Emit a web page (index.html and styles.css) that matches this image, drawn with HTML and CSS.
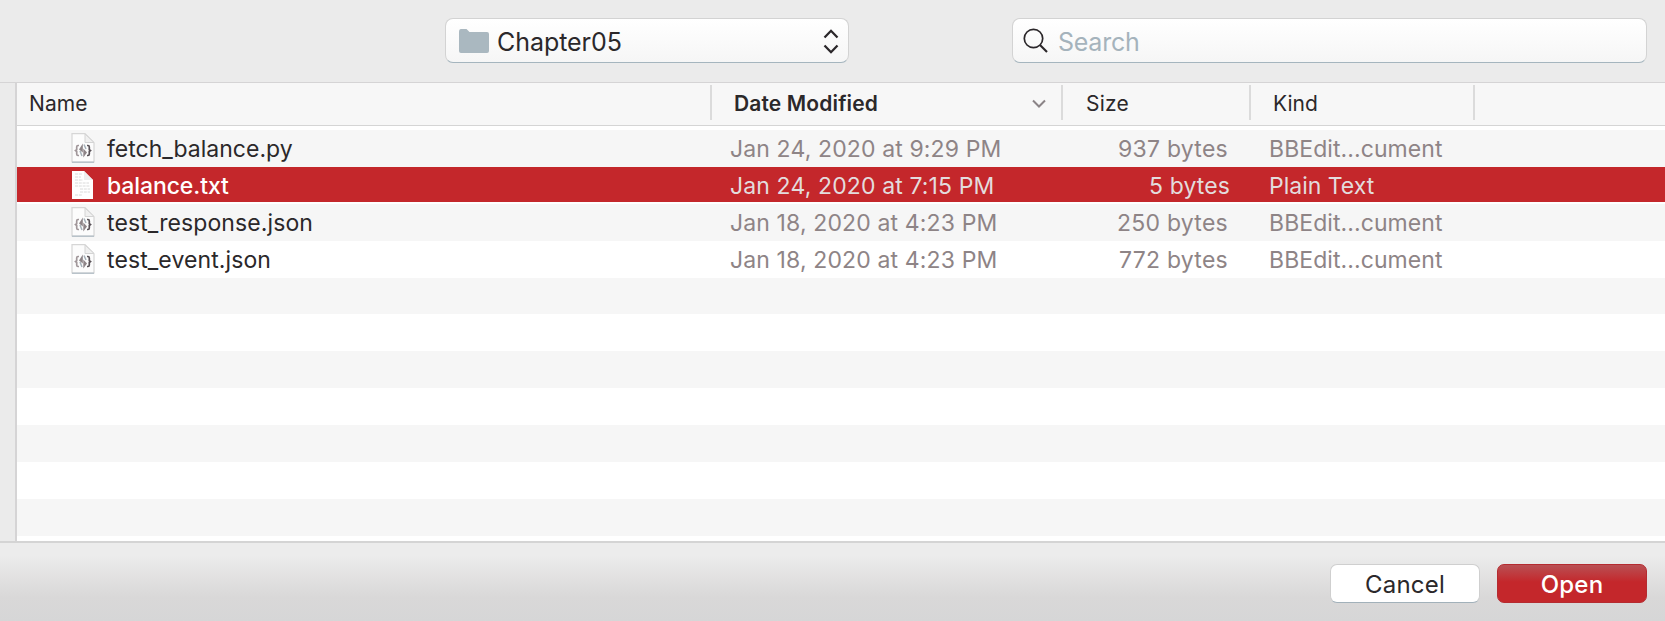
FILE: index.html
```html
<!DOCTYPE html>
<html lang="en">
<head>
<meta charset="utf-8">
<title>Open</title>
<link rel="stylesheet" href="styles.css">
</head>
<body>
<svg class="defs" aria-hidden="true">
  <symbol id="code-doc" viewBox="0 0 24 30">
    <path d="M1 .7h13l9 9V29H1z" fill="#fcfcfc" stroke="#d6d6d6" stroke-width="1.2"/>
    <path d="M14 1v8.500h9z" fill="#f0f0f0" stroke="#d4d4d4"/>
    <path d="M1 29.200h22" stroke="#adb9c2" stroke-width="1.200"/>
    <path d="M8 12.500H7q-1.300 0-1.300 1.500v2.500L4.500 17.500l1.200 1V21Q5.700 22.500 7 22.500h1" fill="none" stroke="#a1979a" stroke-width="1.700"/>
    <path d="M16 12.500h1q1.300 0 1.300 1.500v2.500l1.200 1-1.200 1V21q0 1.500-1.300 1.500h-1" fill="none" stroke="#5a5358" stroke-width="1.700"/>
    <path d="M11.800 10.500v9L8 16.500z" fill="#8e8588"/>
    <path d="M12.300 15.500l3.700 4-3.700 5z" fill="#8e8588"/>
    <path d="M9 18l2 5M13 11.500l2 4.500" stroke="#a5b1b9" stroke-width="1.500"/>
  </symbol>
  <symbol id="text-doc" viewBox="0 0 24 30">
    <path d="M1 1h12l9 9v19H1z" fill="#fff"/>
    <path d="M13 1v9h9z" fill="#eee"/>
    <path d="M4 4h7M4 7h6M4 10h8M4 13h14M4 16h15M9 19h10M9 22h10M4 25h7" stroke="#dadada" stroke-dasharray="3 .8"/>
  </symbol>
</svg>
<div class="dialog">
  <header class="toolbar">
    <div class="folder-select">
      <svg class="folder" viewBox="0 0 30 25"><path d="M0 3q0-3 2-3h5.500l3 3H28q2 0 2 2v17q0 2-2 2H2q-2 0-2-2z" fill="#aab8c0"/></svg>
      <span class="folder-name">Chapter05</span>
      <svg class="updown" viewBox="0 0 16 25"><path d="M1.500 8.500L8 1.800l6.500 6.700M1.500 16.500L8 23.200l6.500-6.700" fill="none" stroke="#2b272a" stroke-width="2.300"/></svg>
    </div>
    <div class="search">
      <svg class="lens" viewBox="0 0 26 26"><circle cx="10.500" cy="10.500" r="9.200" fill="none" stroke="#2b272a" stroke-width="1.700"/><path d="M17 17l7 7" stroke="#2b272a" stroke-width="2.100"/></svg>
      <span class="search-text">Search</span>
    </div>
  </header>
  <main class="browser">
    <div class="sidebar"></div>
    <div class="list">
      <div class="columns">
        <div class="col"><span class="h-name">Name</span></div>
        <div class="col"><span class="h-date">Date Modified</span><svg class="sort" viewBox="0 0 14 10"><path d="M1 1.500l6 6 6-6" fill="none" stroke="#8b8487" stroke-width="2"/></svg></div>
        <div class="col"><span class="h-size">Size</span></div>
        <div class="col"><span class="h-kind">Kind</span></div>
      </div>
      <div class="rows">
        <div class="row"><div class="file"><svg><use href="#code-doc"/></svg><span>fetch_balance.py</span></div><span class="date">Jan 24, 2020 at 9:29 PM</span><span class="size">937 bytes</span><span class="kind">BBEdit...cument</span></div>
        <div class="row selected"><div class="file"><svg><use href="#text-doc"/></svg><span>balance.txt</span></div><span class="date">Jan 24, 2020 at 7:15 PM</span><span class="size">5 bytes</span><span class="kind">Plain Text</span></div>
        <div class="row"><div class="file json"><svg><use href="#code-doc"/></svg><span>test_response.json</span></div><span class="date">Jan 18, 2020 at 4:23 PM</span><span class="size">250 bytes</span><span class="kind">BBEdit...cument</span></div>
        <div class="row"><div class="file json"><svg><use href="#code-doc"/></svg><span>test_event.json</span></div><span class="date">Jan 18, 2020 at 4:23 PM</span><span class="size">772 bytes</span><span class="kind">BBEdit...cument</span></div>
        <div class="row"></div><div class="row"></div><div class="row"></div><div class="row"></div><div class="row"></div><div class="row"></div><div class="row"></div>
      </div>
    </div>
  </main>
  <footer class="actions">
    <button class="btn cancel">Cancel</button>
    <button class="btn open">Open</button>
  </footer>
</div>
</body>
</html>
```
FILE: styles.css
```css
* { box-sizing: border-box; }
body { margin: 0; font-family: Inter, "Liberation Sans", sans-serif; color: #2b282a; }
.defs { display: none; }
.dialog { width: 1665px; height: 621px; display: flex; flex-direction: column; overflow: hidden; background: #ebebeb; }

.toolbar { height: 83px; flex: none; display: flex; align-items: flex-start; padding: 18px 18px 0 445px; gap: 163px; border-bottom: 1px solid #d5d4d5; background: #ebebeb; }
.folder-select, .search { height: 45px; display: flex; align-items: center; border: 1px solid #d3d3d3; border-bottom-color: #a5b5be; border-radius: 8px; background: linear-gradient(#fff, #f6f6f6); font-size: 25px; }
.folder-select { width: 404px; padding: 1px 9px 0 13px; }
.folder { width: 30px; height: 25px; margin-right: 8px; }
.folder-name { flex: 1; padding-top: 1px; letter-spacing: -0.05px; }
.updown { width: 16px; height: 25px; }
.search { flex: 1; padding: 1px 0 0 10px; color: #a5b3bc; }
.lens { width: 26px; height: 26px; margin-right: 9px; }
.search-text { padding-top: 1px; letter-spacing: -0.25px; }

.browser { flex: none; height: 458px; display: flex; }
.sidebar { width: 17px; background: #ebebeb; border-right: 2px solid #d5d4d5; }
.list { flex: 1; background: #fff; }
.columns { height: 43px; display: grid; grid-template-columns: 695px 351px 188px 224px; align-items: start; background: #f7f7f7; border-bottom: 1px solid #d5d5d5; font-size: 21px; }
.col { height: 35px; margin-top: 2px; display: flex; align-items: center; justify-content: space-between; border-right: 2px solid #dbdbdb; padding: 2px 0 0 22px; }
.col:first-child { padding-left: 12px; }
.h-name { letter-spacing: 0.1px; }
.h-date { font-weight: 600; letter-spacing: 0.14px; }
.h-size { padding-left: 1px; letter-spacing: 0.2px; }
.sort { width: 14px; height: 10px; margin-right: 15px; }

.rows { padding-top: 4px; }
.row { height: 36.9px; display: grid; grid-template-columns: 713px 340px 199px 1fr; align-items: center; font-size: 23px; white-space: nowrap; color: #8e8486; }
.row:nth-child(odd) { background: #f6f6f6; }
.row.selected { background: #c4272b linear-gradient(#fff, #fff) bottom / 100% 2px no-repeat; color: #e3dcdd; }
.row span { padding-top: 2px; }
.file { display: flex; align-items: center; gap: 12px; padding-left: 54px; color: #2b282a; }
.file svg { width: 24px; height: 30px; }
.json { letter-spacing: 0.1px; }
.selected .file { color: #fff; font-weight: 500; letter-spacing: -0.1px; }
.date { letter-spacing: 0.13px; }
.size { justify-self: end; margin-right: 41px; letter-spacing: 0.26px; }
.selected .size { margin-right: 39px; letter-spacing: 0.1px; }
.kind { letter-spacing: 0.08px; }
.selected .kind { letter-spacing: 0; }

.actions { flex: 1; display: flex; justify-content: flex-end; gap: 17px; padding: 21px 18px 0; border-top: 2px solid #d4d4d4; background: linear-gradient(#ececec 12px, #d9d8d8 54px, #d6d6d7); }
.btn { width: 150px; height: 39px; padding: 1px 0 0; border-radius: 7px; border: 1px solid #cfcfcf; border-bottom-color: #a2b1ba; background: #fff; font-family: inherit; font-size: 24px; color: #2b282a; }
.btn.cancel { letter-spacing: 0.25px; }
.btn.open { border-color: #b52b30; background: linear-gradient(#b95054, #c4272b 17px); color: #fff; font-weight: 500; letter-spacing: 0.2px; }
```
